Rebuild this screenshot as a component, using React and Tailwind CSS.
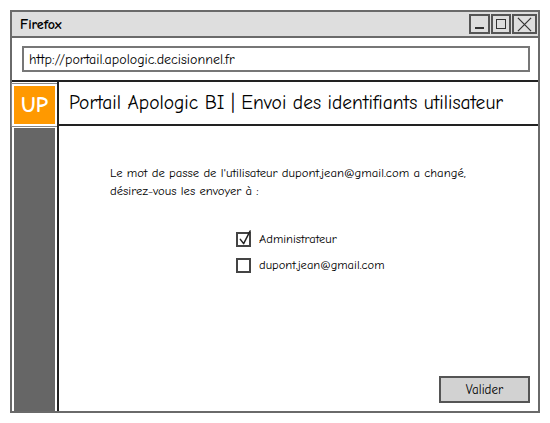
import React from 'react';

const font = { fontFamily: '"Comic Sans MS", "Comic Neue", "Open Sans", "DejaVu Sans", sans-serif' };

function Checkbox({ checked, label }) {
  return (
    <label className="flex items-center gap-[8px] h-[16px]">
      <span className="w-[15px] h-[15px] border-2 border-[#444] bg-white relative flex-none">
        {checked && (
          <svg viewBox="0 0 16 16" className="absolute left-[0px] top-[-5px] w-[15px] h-[17px]" fill="none">
            <path d="M2.5 10 L6 14.5 L13 1" stroke="#222" strokeWidth="1.6" strokeLinecap="round" strokeLinejoin="round" />
          </svg>
        )}
      </span>
      <span className="text-[12.5px] text-black">{label}</span>
    </label>
  );
}

export default function App() {
  return (
    <div className="w-[550px] h-[423px] bg-white pt-[10px] pl-[10px]" style={font}>
      <div className="w-[530px] h-[403px] border-2 border-[#6a6a6a] flex flex-col bg-white">
        {/* title bar */}
        <div className="h-[26px] bg-[#dedede] border-b-2 border-[#6a6a6a] flex items-center justify-between pl-[8px] pr-[1px] flex-none">
          <span className="text-[14px] font-bold text-black">Firefox</span>
          <div className="flex gap-[1px]">
            <span className="w-[21px] h-[20px] border-2 border-[#555] flex items-end justify-center pb-[3px]">
              <span className="w-[9px] h-[2px] bg-[#333]" />
            </span>
            <span className="w-[20px] h-[20px] border-2 border-[#555] flex items-center justify-center">
              <span className="w-[10px] h-[10px] border-[1.5px] border-[#333]" />
            </span>
            <span className="w-[25px] h-[20px] border-2 border-[#555] flex items-center justify-center">
              <svg viewBox="0 0 16 16" className="w-[15px] h-[15px]">
                <path d="M1 1 L15 15 M15 1 L1 15" stroke="#333" strokeWidth="1.3" />
              </svg>
            </span>
          </div>
        </div>
        {/* url bar */}
        <div className="h-[44px] border-b-2 border-[#222] flex items-center pl-[10px] pr-[8px] flex-none">
          <div className="w-full h-[26px] border-2 border-[#777] flex items-center pl-[5px] text-[14px] text-black">
            http://portail.apologic.decisionnel.fr
          </div>
        </div>
        {/* body */}
        <div className="flex flex-1 min-h-0">
          <div className="w-[45px] flex flex-col flex-none">
            <div className="h-[42px] bg-[#f90] border-2 border-white outline outline-1 outline-[#888] mt-[2px] flex items-center justify-center">
              <span className="text-white text-[22px] font-bold leading-none">UP</span>
            </div>
            <div className="flex-1 bg-[#666] border-x-2 border-white mt-[2px]" />
          </div>
          <div className="flex-1 border-l-2 border-[#222] flex flex-col">
            <div className="h-[44px] border-b-2 border-[#222] flex items-center pl-[10px] flex-none">
              <span className="text-[19.5px] text-black whitespace-nowrap">Portail Apologic BI | Envoi des identifiants utilisateur</span>
            </div>
            <div className="flex-1 flex flex-col pl-[51px] pt-[38px] pr-[8px] pb-[8px]">
              <p className="text-[12.7px] leading-[18px] text-black">
                Le mot de passe de l'utilisateur dupont.jean@gmail.com a changé,
                <br />
                désirez-vous les envoyer à :
              </p>
              <div className="flex flex-col gap-[10px] mt-[31px] ml-[126px]">
                <Checkbox checked label="Administrateur" />
                <Checkbox label="dupont.jean@gmail.com" />
              </div>
              <div className="flex-1" />
              <div className="flex justify-end">
                <button className="w-[91px] h-[27px] bg-[#d2d2d2] border-2 border-[#555] text-[13px] text-black">
                  Valider
                </button>
              </div>
            </div>
          </div>
        </div>
      </div>
    </div>
  );
}
